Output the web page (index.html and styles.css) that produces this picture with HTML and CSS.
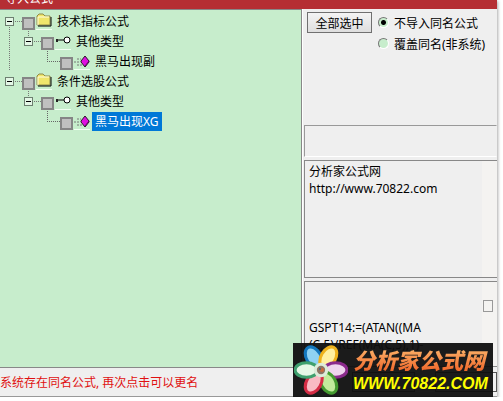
FILE: index.html
```html
<!DOCTYPE html>
<html lang="zh-CN">
  <head>
    <meta charset="utf-8" />
    <title>导入公式</title>
    <link rel="stylesheet" href="styles.css">
  </head>
  <body>
    <!-- shared icons -->
    <svg class="defs" width="0" height="0">
      <symbol id="folder" viewBox="0 0 16 16">
        <path d="M1 12V3l2-2h4l2 2h5v9z" fill="#efe56c" stroke="#8f8a4a" />
        <path d="M2 4h11M2 4v8" stroke="#fffde0" />
        <path d="M15 4v9H2" fill="none" stroke="#000" />
      </symbol>
      <symbol id="key" viewBox="0 0 16 16">
        <path d="M1 7h8" stroke="#000" />
        <path d="M1 6h2v3h-2z" fill="#222" />
        <circle cx="12" cy="7" r="3" fill="#fff" stroke="#000" />
      </symbol>
      <symbol id="gem" viewBox="0 0 16 16">
        <path d="M3 6h4M0 9h6M3 12h5" stroke="#777" stroke-dasharray="2 1" />
        <path d="M11 3l4 5v1l-4 5-4-5V8z" fill="#e010e0" stroke="#222" />
        <path d="M11 13l4-5" stroke="#700070" />
      </symbol>
    </svg>

    <div class="window">
      <header class="title-bar">导入公式</header>

      <main class="content">
        <ul class="tree">
          <li class="branch">
            <div class="row">
              <button class="toggle" aria-label="折叠"></button>
              <span class="dots"></span>
              <input type="checkbox" id="tech" />
              <svg class="icon"><use href="#folder" /></svg>
              <label for="tech">技术指标公式</label>
            </div>
            <ul>
              <li class="child">
                <div class="row">
                  <button class="toggle" aria-label="折叠"></button>
                  <span class="dots"></span>
                  <input type="checkbox" id="techOther" />
                  <svg class="icon"><use href="#key" /></svg>
                  <label for="techOther">其他类型</label>
                </div>
                <ul>
                  <li>
                    <div class="row leaf">
                      <span class="elbow"></span>
                      <input type="checkbox" id="horseSub" />
                      <svg class="icon"><use href="#gem" /></svg>
                      <label for="horseSub">黑马出现副</label>
                    </div>
                  </li>
                </ul>
              </li>
            </ul>
          </li>
          <li>
            <div class="row">
              <button class="toggle" aria-label="折叠"></button>
              <span class="dots"></span>
              <input type="checkbox" id="pick" />
              <svg class="icon"><use href="#folder" /></svg>
              <label for="pick">条件选股公式</label>
            </div>
            <ul>
              <li class="child">
                <div class="row">
                  <button class="toggle" aria-label="折叠"></button>
                  <span class="dots"></span>
                  <input type="checkbox" id="pickOther" />
                  <svg class="icon"><use href="#key" /></svg>
                  <label for="pickOther">其他类型</label>
                </div>
                <ul>
                  <li>
                    <div class="row leaf">
                      <span class="elbow"></span>
                      <input type="checkbox" id="horseXg" />
                      <svg class="icon"><use href="#gem" /></svg>
                      <label for="horseXg" class="selected">黑马出现XG</label>
                    </div>
                  </li>
                </ul>
              </li>
            </ul>
          </li>
        </ul>

        <section class="side">
          <div class="options">
            <button class="select-all">全部选中</button>
            <div class="radios">
              <div class="radio">
                <input type="radio" name="mode" id="skip" checked />
                <label for="skip">不导入同名公式</label>
              </div>
              <div class="radio">
                <input type="radio" name="mode" id="overwrite" />
                <label for="overwrite">覆盖同名(非系统)</label>
              </div>
            </div>
          </div>
          <div class="group"></div>
          <textarea class="note" aria-label="说明" readonly>分析家公式网
http://www.70822.com</textarea>
          <div class="source">
            <textarea class="code" aria-label="源码" readonly>


GSPT14:=(ATAN((MA
(C,5)/REF(MA(C,5),1)-</textarea>
            <span class="thumb"></span>
          </div>
        </section>
      </main>

      <footer class="status">
        <span class="message">系统存在同名公式, 再次点击可以更名</span>
        <div class="actions">
          <button aria-label="导入"></button>
          <button aria-label="取消"></button>
        </div>
      </footer>

      <a class="watermark" href="#">
        <svg class="flower" viewBox="0 0 52 52">
          <g stroke-width="3">
            <ellipse cx="26" cy="12" rx="7" ry="11" fill="#8fd2f3" stroke="#1477bd" transform="rotate(-30 26 26)" />
            <ellipse cx="26" cy="12" rx="7" ry="11" fill="#fff0a0" stroke="#efb21c" transform="rotate(30 26 26)" />
            <ellipse cx="26" cy="12" rx="7" ry="11" fill="#efd5ee" stroke="#8b2a8c" transform="rotate(90 26 26)" />
            <ellipse cx="26" cy="12" rx="7" ry="11" fill="#c3ec9c" stroke="#459b30" transform="rotate(150 26 26)" />
            <ellipse cx="26" cy="12" rx="7" ry="11" fill="#f9bac3" stroke="#d52c45" transform="rotate(210 26 26)" />
            <ellipse cx="26" cy="12" rx="7" ry="11" fill="#e6f8e6" stroke="#3fa06e" transform="rotate(270 26 26)" />
          </g>
          <circle cx="26" cy="26" r="7" fill="#dcebd9" />
          <circle cx="26" cy="26" r="4" fill="#8d7565" />
          <circle cx="27" cy="26" r="2" fill="#c86a3c" />
          <circle cx="25" cy="25" r="1" fill="#3d6d80" />
        </svg>
        <span class="brand">
          <strong>分析家公式网</strong>
          <em>WWW.70822.COM</em>
        </span>
      </a>
    </div>
  </body>
</html>
```
FILE: styles.css
```css
* {
  box-sizing: border-box;
}

body {
  margin: 0;
  padding-right: 6px;
  background-color: #fff;
  font-family: "Noto Sans", "Noto Sans CJK SC", sans-serif;
  font-size: 12px;
  color: #000;
}

button,
input,
textarea {
  margin: 0;
  padding: 0;
  font-family: inherit;
  font-size: inherit;
  color: inherit;
}

ul {
  margin: 0;
  padding: 0;
  list-style: none;
}

.defs {
  position: absolute;
}

.window {
  position: relative;
  display: flex;
  flex-direction: column;
  min-height: calc(100vh - 4px);
  background-color: #efefef;
  border-bottom: 1px solid #999;
  box-shadow: 1px 1px 3px #aaa;
}

.title-bar {
  display: flex;
  align-items: flex-end;
  height: 9px;
  padding: 0 5px 2px;
  overflow: hidden;
  background-color: #b52e33;
  color: #fff;
  line-height: 16px;
}

.content {
  flex: 1;
  display: grid;
  grid-template-columns: 302fr 195fr;
}

/* tree */
.tree {
  padding: 1px 0 0 5px;
  background-color: #c7edcc;
  border-top: 1px solid #888;
  border-right: 1px solid #888;
  border-bottom: 1px solid #888;
}

.tree ul {
  margin-left: 19px;
}

.branch {
  background: repeating-linear-gradient(#777 0 1px, transparent 1px 2px) 4px 14px / 1px 100% no-repeat;
}

.child {
  background: repeating-linear-gradient(#777 0 1px, transparent 1px 2px) 4px 0 / 1px 6px no-repeat;
}

.row {
  display: flex;
  align-items: center;
  height: 20px;
}

.toggle {
  width: 9px;
  height: 9px;
  border: 1px solid #6d7f70;
  background: linear-gradient(#000, #000) center / 5px 1px no-repeat #e3f6e5;
}

.dots {
  width: 8px;
  height: 1px;
  background: repeating-linear-gradient(90deg, transparent 0 1px, #777 1px 2px);
}

.elbow {
  align-self: flex-start;
  width: 13px;
  height: 11px;
  margin-left: 4px;
  border-left: 1px dotted #666;
  border-bottom: 1px dotted #666;
}

.row input {
  appearance: none;
  width: 13px;
  height: 13px;
  margin: 4px 1px 0 0;
  border: 2px solid #858585;
  background-color: #c0c0c0;
}

.icon {
  width: 16px;
  height: 17px;
  border-bottom: 1px solid #f2fff2;
}

.row label {
  margin-left: 2px;
  padding: 0 3px;
  line-height: 19px;
}

.row .selected {
  background-color: #0078d7;
  color: #fff;
}

/* right side */
.side {
  display: flex;
  flex-direction: column;
  gap: 3px;
  padding: 3px 0 1px 1px;
  border-left: 1px solid #fff;
}

.options {
  display: flex;
  align-items: flex-start;
  gap: 6px;
  height: 110px;
  padding-left: 3px;
}

.select-all {
  width: 65px;
  height: 21px;
  border: 1px solid #707070;
  background: linear-gradient(#f4f4f4, #dedede);
  white-space: nowrap;
}

.radio {
  display: flex;
  align-items: center;
  gap: 5px;
  height: 21px;
  white-space: nowrap;
}

.radio input {
  appearance: none;
  width: 11px;
  height: 11px;
  border: 1px solid;
  border-color: #777 #fff #fff #777;
  border-radius: 50%;
  background-color: #c7edcc;
}

.radio input:checked {
  background-image: radial-gradient(circle, #000 2px, transparent 3px);
}

.group {
  height: 32px;
  border: 1px solid;
  border-color: #999 transparent #fff #999;
}

textarea {
  display: block;
  width: 100%;
  padding: 2px 4px 0;
  border: 0;
  border-top: 1px solid #888;
  border-left: 1px solid #888;
  border-bottom: 1px solid #888;
  border-radius: 0;
  background: linear-gradient(90deg, #efefef calc(100% - 15px), #f4f3f1 0);
  line-height: 17px;
  resize: none;
  outline: none;
  overflow: hidden;
}

.note {
  height: 118px;
}

.source {
  position: relative;
  flex: 1;
}

.code {
  height: 100%;
  padding-top: 3px;
}

.thumb {
  position: absolute;
  top: 19px;
  right: 4px;
  width: 10px;
  height: 12px;
  border: 1px solid #999;
}

/* bottom */
.status {
  display: grid;
  grid-template-columns: 352fr 145fr;
  align-items: center;
  height: 28px;
}

.message {
  color: #e01010;
  white-space: nowrap;
}

.actions {
  display: flex;
  gap: 20px;
}

.actions button {
  flex: 1;
  height: 20px;
  border: 1px solid #555;
  background-color: #f2f2f2;
}

.watermark {
  position: absolute;
  right: 4px;
  bottom: -2px;
  display: flex;
  gap: 5px;
  width: 200px;
  height: 55px;
  padding-left: 1px;
  background-color: rgba(15, 15, 15, 0.95);
  text-decoration: none;
}

.flower {
  width: 54px;
  height: 54px;
}

.brand {
  display: flex;
  flex-direction: column;
  white-space: nowrap;
}

.brand strong {
  background: linear-gradient(#ffc477, #ee5a20);
  background-clip: text;
  color: transparent;
  font-family: "Noto Sans CJK SC", sans-serif;
  font-size: 22px;
  font-style: italic;
  font-weight: 900;
  line-height: 32px;
}

.brand em {
  color: #ff0;
  font-family: "Liberation Sans", sans-serif;
  font-size: 16px;
  font-weight: bold;
  line-height: 18px;
}
```
